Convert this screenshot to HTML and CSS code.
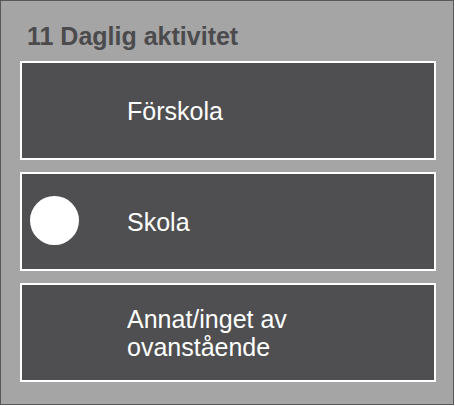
FILE: index.html
```html
<!DOCTYPE html>
<html lang="sv">
<head>
    <meta charset="UTF-8">
    <title>11 Daglig aktivitet</title>

    <link rel="stylesheet" href="styles.css">
</head>
<body>
<div class="question">
    <h2 class="question-title">11 Daglig aktivitet</h2>

    <div class="options">
        <div class="option">
            <div class="option-mark"></div>
            <div class="option-label">Förskola</div>
        </div>

        <div class="option selected">
            <div class="option-mark"><span class="dot"></span></div>
            <div class="option-label">Skola</div>
        </div>

        <div class="option">
            <div class="option-mark"></div>
            <div class="option-label">Annat/inget av ovanstående</div>
        </div>
    </div>
</div>
</body>
</html>
```

FILE: styles.css
```css
body {
    margin: 0;
    font-family: "Liberation Sans", Arial, Helvetica, sans-serif;
}

.question {
    box-sizing: border-box;
    width: 454px;
    height: 405px;
    padding: 21px 17px 0 19px;
    border: 1px solid #58585a;
    background-color: #a5a5a5;
}

.question-title {
    margin: 0 0 10px 7px;
    font-size: 25px;
    line-height: 29px;
    font-weight: bold;
    color: #4b4b4d;
}

.options {
    display: flex;
    flex-direction: column;
    gap: 12px;
}

.option {
    box-sizing: border-box;
    display: flex;
    align-items: center;
    height: 99px;
    border: 2px solid #ffffff;
    background-color: #4f4f51;
}

.option-mark {
    display: flex;
    align-items: center;
    width: 105px;
    height: 100%;
    padding-left: 8px;
    box-sizing: border-box;
}

.dot {
    display: block;
    width: 49px;
    height: 49px;
    margin-top: -2px;
    border-radius: 50%;
    background-color: #ffffff;
}

.option-label {
    max-width: 250px;
    font-size: 25px;
    line-height: 28px;
    color: #ffffff;
}
```
